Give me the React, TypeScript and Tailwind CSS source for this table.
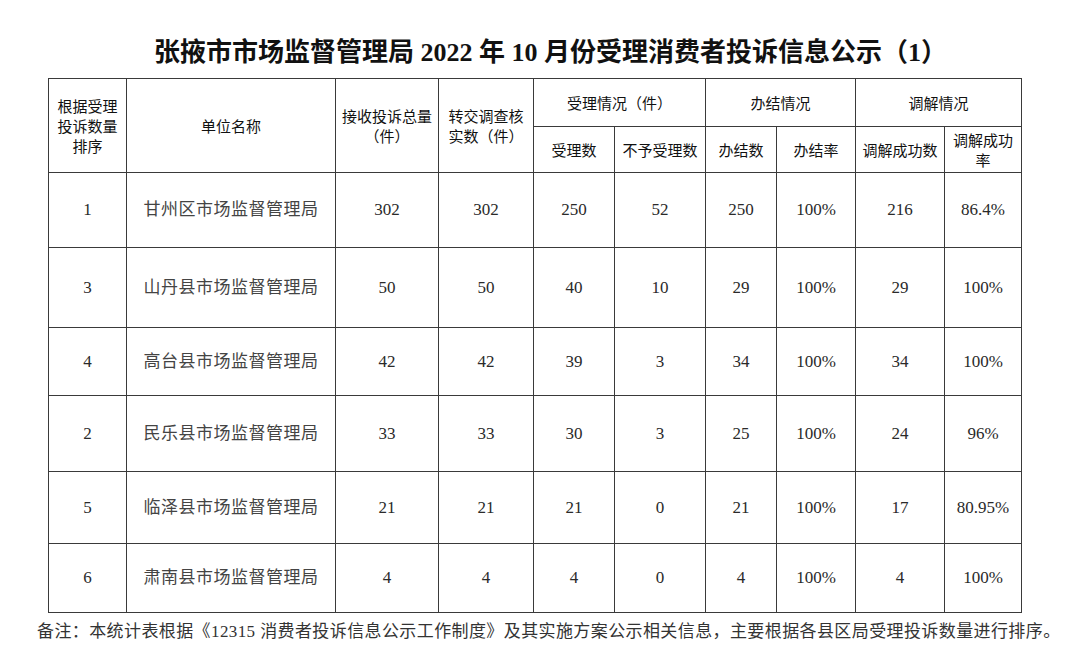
const cols = ['w-[78px]', 'w-[209px]', 'w-[103px]', 'w-[95px]', 'w-[81px]', 'w-[91px]', 'w-[71px]', 'w-[79px]', 'w-[89px]', 'w-[77px]']

const rows = [
  { h: 'h-[75px]', cells: ['1', '甘州区市场监督管理局', '302', '302', '250', '52', '250', '100%', '216', '86.4%'] },
  { h: 'h-[80px]', cells: ['3', '山丹县市场监督管理局', '50', '50', '40', '10', '29', '100%', '29', '100%'] },
  { h: 'h-[68px]', cells: ['4', '高台县市场监督管理局', '42', '42', '39', '3', '34', '100%', '34', '100%'] },
  { h: 'h-[76px]', cells: ['2', '民乐县市场监督管理局', '33', '33', '30', '3', '25', '100%', '24', '96%'] },
  { h: 'h-[72px]', cells: ['5', '临泽县市场监督管理局', '21', '21', '21', '0', '21', '100%', '17', '80.95%'] },
  { h: 'h-[69px]', cells: ['6', '肃南县市场监督管理局', '4', '4', '4', '0', '4', '100%', '4', '100%'] },
]

const th = 'border border-[#3a3a3a] text-center align-middle font-normal leading-[20px] p-0'
const td = 'border border-[#3a3a3a] text-center align-middle p-0'

export default function App() {
  return (
    <div className="w-[1075px] h-[660px] bg-white overflow-hidden">
      {/* Title */}
      <div className="h-[78px] pt-[38px] pl-[26px] text-center text-[26px] leading-[30px] font-bold text-[#111] whitespace-nowrap font-['Liberation_Serif','Noto_Sans_CJK_SC',serif]">
        张掖市市场监督管理局 2022 年 10 月份受理消费者投诉信息公示（1）
      </div>

      <table className="ml-[48px] border-collapse table-fixed w-[974px]">
        <colgroup>
          {cols.map((c, i) => (
            <col key={i} className={c} />
          ))}
        </colgroup>
        <thead className="text-[15px] text-[#111] font-['Noto_Sans_CJK_SC',sans-serif]">
          <tr className="h-[48px]">
            <th rowSpan={2} className={th}>
              根据受理<br />投诉数量<br />排序
            </th>
            <th rowSpan={2} className={th}>单位名称</th>
            <th rowSpan={2} className={th}>
              接收投诉总量<br />（件）
            </th>
            <th rowSpan={2} className={th}>
              转交调查核<br />实数（件）
            </th>
            <th colSpan={2} className={th}>受理情况（件）</th>
            <th colSpan={2} className={th}>办结情况</th>
            <th colSpan={2} className={th}>调解情况</th>
          </tr>
          <tr className="h-[46px]">
            <th className={th}>受理数</th>
            <th className={th}>不予受理数</th>
            <th className={th}>办结数</th>
            <th className={th}>办结率</th>
            <th className={th}>调解成功数</th>
            <th className={th}>
              调解成功<br />率
            </th>
          </tr>
        </thead>
        <tbody className="text-[17px] text-[#2a2a2a] font-['Liberation_Serif','Noto_Sans_CJK_SC',serif]">
          {rows.map((r) => (
            <tr key={r.cells[1]} className={r.h}>
              {r.cells.map((c, i) => (
                <td key={i} className={i === 1 ? td + ' text-[#444] tracking-[0.5px]' : td}>
                  {c}
                </td>
              ))}
            </tr>
          ))}
        </tbody>
      </table>

      {/* Footnote */}
      <div className="pl-[37px] pt-[9px] text-[17px] leading-[20px] tracking-[0.4px] text-[#333] whitespace-nowrap font-['Liberation_Serif','Noto_Sans_CJK_SC',serif]">
        备注：本统计表根据《12315 消费者投诉信息公示工作制度》及其实施方案公示相关信息，主要根据各县区局受理投诉数量进行排序。
      </div>
    </div>
  )
}
